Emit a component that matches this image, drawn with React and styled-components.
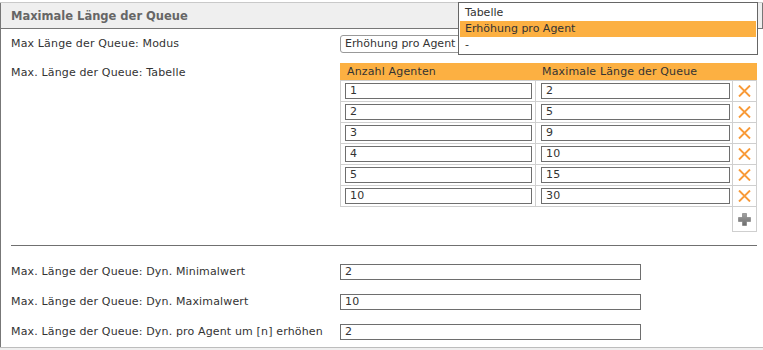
import React from "react";
import styled, { createGlobalStyle } from "styled-components";

const Global = createGlobalStyle`
  html, body { margin: 0; padding: 0; background: #fff; }
  body { font-family: "DejaVu Sans", Verdana, sans-serif; font-size: 11px; letter-spacing: 0.15px; color: #333; }
  * { box-sizing: border-box; }
`;

const ORANGE = "#fcb042";

const Page = styled.div`
  position: relative;
  width: 763px;
  height: 350px;
  overflow: hidden;
  padding-top: 2px;
`;

const Panel = styled.section`
  border-top: 1px solid #c9c9c9;
  width: 763px;
`;

const Header = styled.header`
  height: 26px;
  background: #efefef;
  border-left: 1px solid #777;
  border-right: 1px solid #777;
  border-bottom: 1px solid #777;
  padding-left: 10px;
  display: flex;
  align-items: center;
  font-weight: bold;
  font-size: 11.5px;
  letter-spacing: 0;
  color: #666;
`;

const Body = styled.div`
  border-left: 1px solid #777;
  padding: 6px 6px 7px 10px;
`;

const FormRow = styled.div`
  display: grid;
  grid-template-columns: 329px 1fr;
  align-items: ${(p) => (p.$top ? "start" : "center")};
  margin-top: ${(p) => p.$mt || 0}px;
`;

const Label = styled.div`
  line-height: ${(p) => p.$lh || 16}px;
  padding-top: ${(p) => p.$pt || 0}px;
  white-space: nowrap;
  color: #333;
`;

const SelectBox = styled.div`
  width: 150px;
  height: 18px;
  border: 1px solid #999;
  border-radius: 3px;
  padding: 0 4px;
  line-height: 16px;
  letter-spacing: 0;
  color: #333;
  white-space: nowrap;
`;

const Table = styled.div`
  width: 417px;
`;

const Grid = styled.div`
  display: grid;
  grid-template-columns: 195px 197px 25px;
`;

const HeadRow = styled(Grid)`
  height: 17px;
  background: ${ORANGE};
  line-height: 18px;
  color: #333;
`;

const HeadCell = styled.div`
  padding-left: 7px;
  white-space: nowrap;
`;

const Row = styled(Grid)`
  border-top: 1px solid #cfcfcf;
  border-bottom: ${(p) => (p.$last ? "1px solid #cfcfcf" : "none")};
  height: ${(p) => (p.$last ? 22 : 21)}px;
`;

const Cell = styled.div`
  border-left: 1px solid #cfcfcf;
  border-right: ${(p) => (p.$end ? "1px solid #cfcfcf" : "none")};
  display: flex;
  align-items: center;
  justify-content: ${(p) => (p.$center ? "center" : "flex-start")};
  padding-left: ${(p) => (p.$center ? 0 : p.$pl || 4)}px;
`;

const Input = styled.div`
  width: ${(p) => p.$w}px;
  height: 16px;
  border: 1px solid #6e6e6e;
  padding: 0 4px;
  line-height: 14px;
  color: #333;
  background: #fff;
`;

const AddRow = styled(Grid)`
  height: 25px;
`;

const AddCell = styled.div`
  grid-column: 3;
  border-left: 1px solid #cfcfcf;
  border-right: 1px solid #cfcfcf;
  border-bottom: 1px solid #cfcfcf;
  display: flex;
  align-items: center;
  justify-content: center;
`;

const Divider = styled.hr`
  margin: 13px 0 0 0;
  border: 0;
  border-top: 1px solid #707070;
  width: 746px;
  height: 0;
`;

const NextHeader = styled.div`
  border-top: 1px solid #bdbdbd;
  background: #efefef;
  height: 10px;
`;

const Dropdown = styled.ul`
  position: absolute;
  left: 458px;
  top: 2px;
  width: 300px;
  height: 53px;
  margin: 0;
  list-style: none;
  border: 1px solid #666;
  background: #fff;
  padding: 2px 1px 1px 1px;
`;

const Option = styled.li`
  height: 16px;
  line-height: 16px;
  padding-left: 5px;
  letter-spacing: 0;
  color: #333;
  background: ${(p) => (p.$active ? ORANGE : "transparent")};
`;

const XIcon = () => (
  <svg width="13" height="12" viewBox="0 0 13 12">
    <path d="M1 0.5 L12 11.5 M12 0.5 L1 11.5" stroke="#f89a38" strokeWidth="1.9" fill="none" />
  </svg>
);

const PlusIcon = () => (
  <svg width="13" height="13" viewBox="0 0 13 13">
    <defs>
      <linearGradient id="pg" x1="0" y1="0" x2="0" y2="1">
        <stop offset="0" stopColor="#a2a2a2" />
        <stop offset="1" stopColor="#6c6c6c" />
      </linearGradient>
    </defs>
    <path d="M4.5 0.5 H8.5 V4.5 H12.5 V8.5 H8.5 V12.5 H4.5 V8.5 H0.5 V4.5 H4.5 Z" fill="url(#pg)" stroke="#777" strokeWidth="0.6" />
  </svg>
);

const rows = [
  ["1", "2"],
  ["2", "5"],
  ["3", "9"],
  ["4", "10"],
  ["5", "15"],
  ["10", "30"],
];

const dyn = [
  ["Max. Länge der Queue: Dyn. Minimalwert", "2"],
  ["Max. Länge der Queue: Dyn. Maximalwert", "10"],
  ["Max. Länge der Queue: Dyn. pro Agent um [n] erhöhen", "2"],
];

export default function App() {
  return (
    <>
      <Global />
      <Page>
        <Panel>
          <Header>Maximale Länge der Queue</Header>
          <Body>
            <FormRow>
              <Label>Max Länge der Queue: Modus</Label>
              <div>
                <SelectBox>Erhöhung pro Agent</SelectBox>
              </div>
            </FormRow>
            <FormRow $top $mt={10}>
              <Label $lh={17} $pt={1}>Max. Länge der Queue: Tabelle</Label>
              <Table>
                <HeadRow>
                  <HeadCell>Anzahl Agenten</HeadCell>
                  <HeadCell>Maximale Länge der Queue</HeadCell>
                  <HeadCell />
                </HeadRow>
                {rows.map(([a, b], i) => (
                  <Row key={i} $last={i === rows.length - 1}>
                    <Cell>
                      <Input $w={187}>{a}</Input>
                    </Cell>
                    <Cell $pl={5}>
                      <Input $w={189}>{b}</Input>
                    </Cell>
                    <Cell $center $end>
                      <XIcon />
                    </Cell>
                  </Row>
                ))}
                <AddRow>
                  <AddCell>
                    <PlusIcon />
                  </AddCell>
                </AddRow>
              </Table>
            </FormRow>
            <Divider />
            {dyn.map(([l, v], i) => (
              <FormRow key={i} $mt={i === 0 ? 18 : 14}>
                <Label>{l}</Label>
                <Input $w={301}>{v}</Input>
              </FormRow>
            ))}
          </Body>
          <NextHeader />
        </Panel>
        <Dropdown>
          <Option>Tabelle</Option>
          <Option $active>Erhöhung pro Agent</Option>
          <Option>-</Option>
        </Dropdown>
      </Page>
    </>
  );
}
